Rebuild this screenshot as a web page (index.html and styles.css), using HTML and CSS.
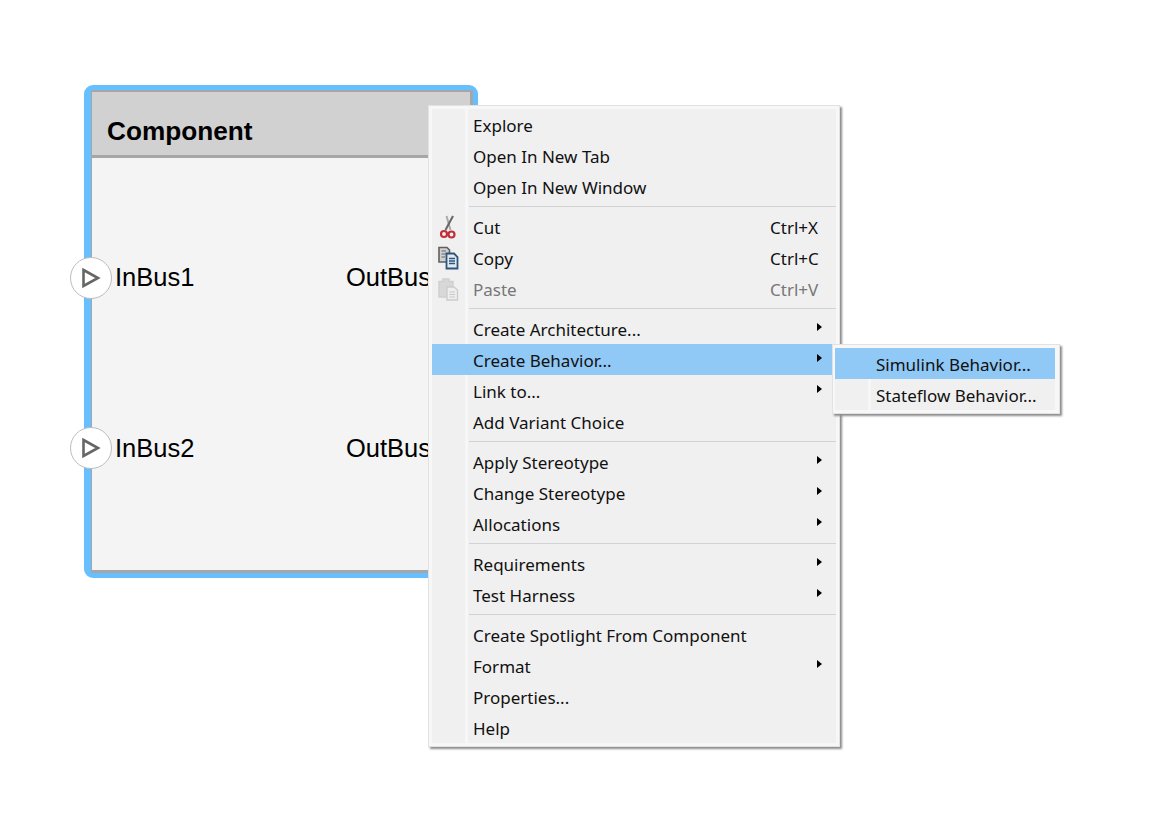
FILE: index.html
```html
<!DOCTYPE html>
<html lang="en">
<head>
<meta charset="utf-8">
<title>Component menu</title>
<link rel="stylesheet" href="styles.css">
</head>
<body>
<main class="canvas">
  <section class="block">
    <div class="block-inner">
      <header class="block-title">Component</header>
      <div class="block-body">
        <div class="bus-row"><span>InBus1</span><span>OutBus1</span></div>
        <div class="bus-row"><span>InBus2</span><span>OutBus2</span></div>
      </div>
    </div>
    <span class="port port-1"><svg width="20" height="20" viewBox="0 0 20 20"><path d="M2.5 2 L17 10 L2.5 18 Z" fill="none" stroke="#666" stroke-width="2.6"/></svg></span>
    <span class="port port-2"><svg width="20" height="20" viewBox="0 0 20 20"><path d="M2.5 2 L17 10 L2.5 18 Z" fill="none" stroke="#666" stroke-width="2.6"/></svg></span>
  </section>

  <nav class="menu">
    <div class="item"><span class="cell"></span><span class="label">Explore</span></div>
    <div class="item"><span class="cell"></span><span class="label">Open In New Tab</span></div>
    <div class="item"><span class="cell"></span><span class="label">Open In New Window</span></div>
    <hr class="sep">
    <div class="item"><span class="cell"><svg width="24" height="24" viewBox="0 0 24 24"><path d="M10.500 1 L14.500 15" stroke="#aaa" stroke-width="2" fill="none"/><path d="M17 1 L9.500 15" stroke="#666" stroke-width="2" fill="none"/><circle cx="8" cy="19" r="3" fill="none" stroke="#c0303a" stroke-width="2.200"/><circle cx="15.500" cy="19.500" r="3" fill="none" stroke="#c0303a" stroke-width="2.200"/></svg></span><span class="label">Cut</span><span class="key">Ctrl+X</span></div>
    <div class="item"><span class="cell"><svg width="24" height="24" viewBox="0 0 24 24"><path d="M3 1.500 H11 L13.500 4 V16 H3 Z" fill="#d0d0d0" stroke="#5f5f5f" stroke-width="1.600"/><path d="M5.500 5 H10 M5.500 8 H10 M5.500 11 H9" stroke="#666"/><path d="M10.500 7.500 H18 L21.500 11 V22.500 H10.500 Z" fill="#dfe9f3" stroke="#2f5478" stroke-width="1.800"/><path d="M13 12.500 H19 M13 15 H19 M13 17.500 H19" stroke="#2f5478" stroke-width="1.300"/></svg></span><span class="label">Copy</span><span class="key">Ctrl+C</span></div>
    <div class="item disabled"><span class="cell"><svg width="24" height="24" viewBox="0 0 24 24"><path d="M3 4.500 H7 V2 H13 V4.500 H17 V20 H3 Z" fill="#d8d8d8" stroke="#cfcfcf" stroke-width="1.400"/><path d="M11 10 H18 L21.500 13 V23 H11 Z" fill="#eee" stroke="#ccc" stroke-width="1.400"/><path d="M13.500 15 H19 M13.500 17.500 H19 M13.500 20 H19" stroke="#c8c8c8"/></svg></span><span class="label">Paste</span><span class="key">Ctrl+V</span></div>
    <hr class="sep">
    <div class="item"><span class="cell"></span><span class="label">Create Architecture...</span><i class="arrow"></i></div>
    <div class="item active"><span class="cell"></span><span class="label">Create Behavior...</span><i class="arrow"></i>
      <div class="menu submenu">
        <div class="item active"><span class="cell"></span><span class="label">Simulink Behavior...</span></div>
        <div class="item"><span class="cell"></span><span class="label">Stateflow Behavior...</span></div>
      </div>
    </div>
    <div class="item"><span class="cell"></span><span class="label">Link to...</span><i class="arrow"></i></div>
    <div class="item"><span class="cell"></span><span class="label">Add Variant Choice</span></div>
    <hr class="sep">
    <div class="item"><span class="cell"></span><span class="label">Apply Stereotype</span><i class="arrow"></i></div>
    <div class="item"><span class="cell"></span><span class="label">Change Stereotype</span><i class="arrow"></i></div>
    <div class="item"><span class="cell"></span><span class="label">Allocations</span><i class="arrow"></i></div>
    <hr class="sep">
    <div class="item"><span class="cell"></span><span class="label">Requirements</span><i class="arrow"></i></div>
    <div class="item"><span class="cell"></span><span class="label">Test Harness</span><i class="arrow"></i></div>
    <hr class="sep">
    <div class="item"><span class="cell"></span><span class="label">Create Spotlight From Component</span></div>
    <div class="item"><span class="cell"></span><span class="label">Format</span><i class="arrow"></i></div>
    <div class="item"><span class="cell"></span><span class="label">Properties...</span></div>
    <div class="item"><span class="cell"></span><span class="label">Help</span></div>
  </nav>
</main>
</body>
</html>
```
FILE: styles.css
```css
html, body { margin: 0; padding: 0; background: #fff; }
.canvas { position: relative; width: 1149px; height: 837px; overflow: hidden; }

.block {
  position: absolute; left: 84px; top: 85px; width: 394px; height: 493px;
  box-sizing: border-box; border: 5px solid #66bfff; border-left-width: 7px;
  border-radius: 9px; background: #66bfff;
  font-family: "Liberation Sans", Arial, sans-serif; color: #000;
}
.block-inner {
  box-sizing: border-box; height: 100%; display: flex; flex-direction: column;
  border: 3px solid #a6a6a6; border-left-width: 1px; border-top-width: 2px; background: #f4f4f4;
}
.block-title {
  box-sizing: border-box; height: 66px; background: #d1d1d1; border-bottom: 3px solid #a6a6a6;
  font-size: 26.2px; font-weight: 700; line-height: 26px; padding: 26px 0 0 15px;
}
.block-body { flex: 1; display: flex; flex-direction: column; gap: 141px; padding: 104px 0 0 23px; }
.bus-row { display: flex; height: 30px; line-height: 30px; font-size: 25.5px; }
.bus-row span:first-child { width: 231px; }

.port {
  position: absolute; left: -21px; width: 42px; height: 42px; box-sizing: border-box;
  border-radius: 50%; background: #fff; border: 1px solid #bdbdbd;
  display: flex; align-items: center; justify-content: center;
}
.port-1 { top: 167px; }
.port-2 { top: 337px; }

.menu {
  position: absolute; left: 428px; top: 105px; width: 412px; box-sizing: border-box;
  border: 1px solid #e2e2e2; padding: 3px;
  background:
    linear-gradient(90deg, #f0f0f0 0, #f0f0f0 33px, #f7f7f7 33px, #f7f7f7 36px, #f0f0f0 36px) content-box no-repeat,
    #f7f7f7;
  box-shadow: 2px 2px 2px #8c8c8c;
  font-family: "Noto Sans", sans-serif; font-size: 17px; color: #111;
}
.item { position: relative; display: flex; align-items: center; height: 31px; line-height: 29px; white-space: nowrap; }
.item.active { background: #90c8f6; }
.item.disabled { color: #777; }
.label { padding-top: 2px; }
.cell { flex: none; width: 41px; height: 24px; display: flex; padding-left: 4px; box-sizing: border-box; }
.key { position: absolute; left: 338px; padding-top: 2px; }
.arrow {
  position: absolute; left: 385px; top: 10px; width: 0; height: 0;
  border-left: 5px solid #000; border-top: 4px solid transparent; border-bottom: 4px solid transparent;
}
.sep { height: 1px; margin: 4px 0 4px 37px; border: 0; background: #d2d2d2; }

.submenu { left: 400px; top: 0; width: 228px; padding: 3px 4px 3px 2px; z-index: 2; }
```
